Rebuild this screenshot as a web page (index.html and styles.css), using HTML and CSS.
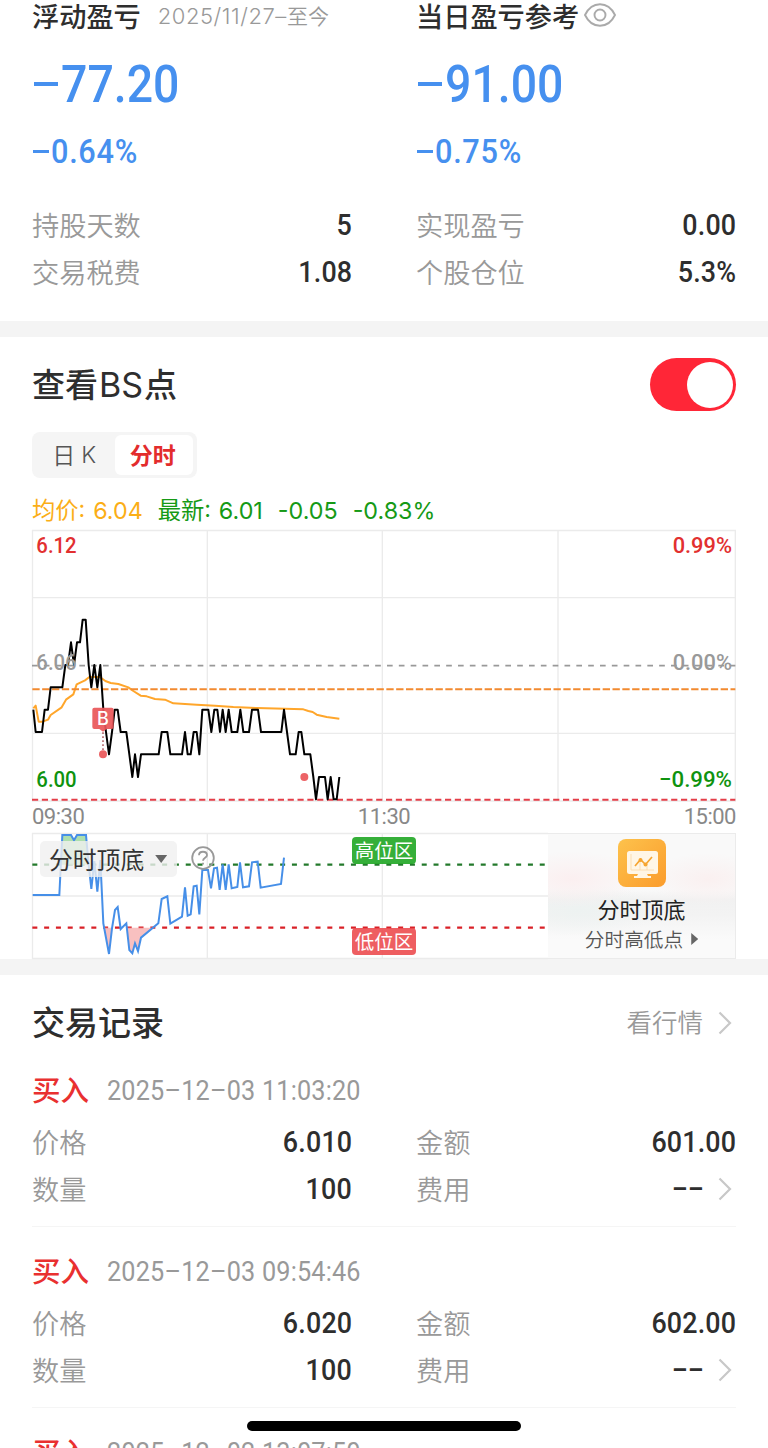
FILE: index.html
```
<!DOCTYPE html>
<html lang="zh-CN">
<head>
<meta charset="utf-8">
<title>持仓盈亏</title>
<link rel="stylesheet" href="styles.css">
</head>
<body>
<main class="page">
  <section class="summary">
    <div class="summary-col">
      <div class="summary-title"><span class="name">浮动盈亏</span><span class="range"><span class="range-num">2025/11/27–</span>至今</span></div>
      <div class="amount"><span class="dash"></span><span class="digits">77.20</span></div>
      <div class="percent"><span class="dash"></span><span class="digits">0.64%</span></div>
      <div class="kv"><span class="label">持股天数</span><span class="value">5</span></div>
      <div class="kv"><span class="label">交易税费</span><span class="value">1.08</span></div>
    </div>
    <div class="summary-col">
      <div class="summary-title"><span class="name">当日盈亏参考</span>
        <svg class="eye" viewBox="0 0 32 24"><path d="M1 12C8-2.400 24-2.400 31 12C24 26.400 8 26.400 1 12Z"/><circle cx="16" cy="12" r="5.500"/></svg>
      </div>
      <div class="amount"><span class="dash"></span><span class="digits">91.00</span></div>
      <div class="percent"><span class="dash"></span><span class="digits">0.75%</span></div>
      <div class="kv"><span class="label">实现盈亏</span><span class="value">0.00</span></div>
      <div class="kv"><span class="label">个股仓位</span><span class="value">5.3%</span></div>
    </div>
  </section>

  <section class="bs">
    <header class="bs-head"><h2 class="heading">查看<span class="latin">BS</span>点</h2><span class="switch"><span class="knob"></span></span></header>
    <div class="tabs"><span class="tab">日<span class="tab-k">K</span></span><span class="tab active">分时</span></div>
    <div class="legend"><span class="avg">均价: 6.04</span><span>最新: 6.01</span><span>-0.05</span><span>-0.83%</span></div>

    <svg class="price-chart" viewBox="36 15 2112 819">
      <g class="grid">
        <path d="M37.500 16.500H2146V828H37.500Z"/>
        <path d="M562 16V828M1087 16V828M1614 16V828M38 218H2146M38 625H2146"/>
      </g>
      <path class="avg-line" d="M40 550L47 542L56 590L68 590L84 584L92 570L125 547L138 524L160 508L170 478L195 466L208 456L240 456L256 468L272 474L295 477L325 487L340 498L362 512L380 514L405 522L435 524L460 535L530 539L585 542L640 546L710 549L850 553L865 558L878 561L890 569L920 576L958 581"/>
      <path class="ref-mid" d="M36 422H2146"/>
      <path class="ref-cost" d="M37 493H2146"/>
      <path class="ref-low" d="M36 824H2146"/>
      <path class="price-line" d="M40 554L47 621H66L74 554H84L92 487H127L136 420H144L153 352L162 420L171 352H180L188 284H197L206 420L214 487L223 420L232 487L241 420L250 554L258 621L267 688L276 621L284 554H293L302 621H319L328 688L337 756L345 688L354 756L363 688H416L425 621H442L451 688H486L495 621L503 688H512L521 621H530L538 688L547 554H565L574 621L583 554H592L600 621L608 554L617 621L626 554L635 621H652L661 554L670 621H687L696 554H714L723 621H784L792 554L801 621L810 688H827L836 621H844L853 688H871L880 756L888 823L897 756H915L923 823L932 756L941 823H950L958 756"/>
      <g class="marker">
        <rect x="217" y="548" width="64" height="64" rx="6"/>
        <path d="M238 612L249 620L260 612Z"/>
        <path class="marker-stem" d="M249 622V680"/>
        <circle cx="249" cy="688" r="12"/>
        <circle cx="853" cy="756" r="12"/>
      </g>
      <text class="marker-text" x="249" y="600">B</text>
      <text class="scale up" x="49" y="83" textLength="121" lengthAdjust="spacingAndGlyphs">6.12</text>
      <text class="scale flat" x="49" y="434" textLength="121" lengthAdjust="spacingAndGlyphs">6.06</text>
      <text class="scale down" x="49" y="785" textLength="121" lengthAdjust="spacingAndGlyphs">6.00</text>
      <text class="scale up" x="1958" y="83" textLength="178" lengthAdjust="spacingAndGlyphs">0.99%</text>
      <text class="scale flat" x="1958" y="434" textLength="178" lengthAdjust="spacingAndGlyphs">0.00%</text>
      <text class="scale down" x="1917" y="785" textLength="219" lengthAdjust="spacingAndGlyphs">−0.99%</text>
    </svg>
    <div class="axis"><span>09:30</span><span>11:30</span><span>15:00</span></div>

    <div class="sub">
      <svg class="sub-chart" viewBox="36 24 1548 378">
        <g class="grid"><path d="M1584 25.500H37.500V400.500H1584M562 25V400M1087 25V400M38 213H1584"/></g>
        <path class="ref-high" d="M37 119H1578"/>
        <path class="ref-bottom" d="M37 308H1578"/>
        <path class="zone-high" d="M122 119L127 30H153L162 46L171 30H198L206 119Z"/>
        <path class="zone-low" d="M252 308L267 385L277 308ZM321 308L328 375L337 385L345 355L354 378L363 338L398 308Z"/>
        <path class="signal" d="M38 210H118L127 30H153L162 46L171 30H198L206 120L214 192L223 108L232 200L241 105L250 295L267 387L276 310L285 255L293 246L302 312L319 295L328 375L337 385L345 355L354 378L363 338L415 295L425 222L442 214L451 296L486 275L495 187L503 272L512 268L521 184L530 182L538 268L547 135H564L573 190L582 130L591 128L599 195L608 118L617 195L626 118L635 190L652 186L660 112L669 187L687 184L696 112L713 110L722 188L783 177L792 98"/>
      </svg>
      <aside class="promo">
        <svg class="promo-icon" viewBox="0 0 48 48">
          <defs><linearGradient id="amber" x1="0" y1="0" x2="1" y2="1"><stop offset="0" stop-color="#fdc24c"/><stop offset="1" stop-color="#fb9c2c"/></linearGradient></defs>
          <rect width="48" height="48" rx="8" fill="url(#amber)"/>
          <rect x="9" y="12" width="31" height="23" rx="2.500" fill="#fff6e6"/>
          <path d="M20 35H29L30 37H33V39H16V37H19Z" fill="#fff6e6"/>
          <path d="M13 15V31H36M22 22V31M29 25V31" fill="none" stroke="#fbd9a4" stroke-width=".8"/>
          <path d="M17 27L22.500 20.500L27.500 25.500L34 18" fill="none" stroke="#f6a530" stroke-width="1.700"/>
          <circle cx="22.500" cy="21" r="2" fill="#f6a530"/><circle cx="27.500" cy="25.500" r="2" fill="#f6a530"/>
        </svg>
        <div class="promo-title">分时顶底</div>
        <div class="promo-sub">分时高低点<span class="play"></span></div>
      </aside>
      <div class="picker">分时顶底<span class="caret"></span></div>
      <svg class="help" viewBox="0 0 24 24"><circle cx="12" cy="12" r="10.800"/><path d="M8 9.200C8 4.600 16 4.600 16 9.200C16 11.800 12 11.800 12 14.800M12 16.800V18.600"/></svg>
      <div class="zone high">高位区</div>
      <div class="zone low">低位区</div>
    </div>
  </section>

  <section class="records">
    <header class="records-head"><h2 class="heading">交易记录</h2><span class="more"><span class="more-text">看行情</span><svg class="chevron" viewBox="0 0 14 24"><path d="M1.500 1.500L12 12L1.500 22.500"/></svg></span></header>

    <article class="record">
      <div class="record-head"><span class="side">买入</span><time class="time">2025–12–03 11:03:20</time></div>
      <div class="record-grid">
        <div class="kv"><span class="label">价格</span><span class="value">6.010</span></div>
        <div class="kv"><span class="label">金额</span><span class="value">601.00</span></div>
        <div class="kv"><span class="label">数量</span><span class="value">100</span></div>
        <div class="kv"><span class="label">费用</span><span class="fee"><span class="none">--</span><svg class="chevron" viewBox="0 0 14 24"><path d="M1.500 1.500L12 12L1.500 22.500"/></svg></span></div>
      </div>
    </article>

    <article class="record">
      <div class="record-head"><span class="side">买入</span><time class="time">2025–12–03 09:54:46</time></div>
      <div class="record-grid">
        <div class="kv"><span class="label">价格</span><span class="value">6.020</span></div>
        <div class="kv"><span class="label">金额</span><span class="value">602.00</span></div>
        <div class="kv"><span class="label">数量</span><span class="value">100</span></div>
        <div class="kv"><span class="label">费用</span><span class="fee"><span class="none">--</span><svg class="chevron" viewBox="0 0 14 24"><path d="M1.500 1.500L12 12L1.500 22.500"/></svg></span></div>
      </div>
    </article>

    <article class="record">
      <div class="record-head"><span class="side">买入</span><time class="time">2025–12–02 13:07:50</time></div>
    </article>
  </section>
  <div class="home-bar"></div>
</main>
</body>
</html>
```
FILE: styles.css
```
* { box-sizing: border-box; }
body { margin: 0; background: #fff; }
.page {
  position: relative;
  width: 768px;
  height: 1448px;
  overflow: hidden;
  background: #fff;
  color: #2e2e2e;
  font-family: "Noto Sans CJK SC", sans-serif;
}
.page svg { display: block; flex: none; overflow: visible; }

/* summary */
.summary {
  display: grid;
  grid-template-columns: 320px 320px;
  gap: 64px;
  height: 321px;
  padding: 0 32px;
}
.summary-title { display: flex; align-items: center; height: 30px; line-height: 30px; }
.name { font-size: 27.200px; font-weight: 500; white-space: nowrap; }
.range { margin-left: 17px; font-size: 21px; font-weight: 350; color: #999; white-space: nowrap; }
.range-num { font-family: Inter, sans-serif; font-size: 22px; font-weight: 300; letter-spacing: .550px; }
.eye { width: 32px; height: 24px; margin-left: 5px; fill: none; stroke: #aaa; stroke-width: 1.900; }
.amount, .percent {
  display: flex;
  align-items: center;
  font-family: Roboto, sans-serif;
  font-weight: 500;
  color: #4690ef;
}
.digits { transform: scaleX(.93); transform-origin: left; }
.amount { height: 78px; margin-top: 15px; font-size: 52px; letter-spacing: 0; }
.amount .digits { transform: scaleX(.893); }
.amount .dash { width: 24px; height: 4px; margin: 0 3px 0 2px; background: currentColor; }
.percent { height: 56px; font-size: 33px; letter-spacing: .750px; }
.percent .dash { width: 16px; height: 3px; margin: 0 2px 0 1px; background: currentColor; }
.percent + .kv { margin-top: 23px; }
.kv { display: flex; justify-content: space-between; align-items: center; height: 47px; }
.label { font-size: 27.200px; font-weight: 350; color: #999; line-height: 40px; margin-top: -4px; }
.value { margin: -2px 0 0; font-family: Roboto, sans-serif; font-size: 29.500px; font-weight: 500; letter-spacing: .200px; transform: scaleX(.91); transform-origin: right; }

/* chart section */
.bs { height: 638px; padding: 0 32px; border-top: 16px solid #f4f4f4; }
.bs-head { display: flex; justify-content: space-between; align-items: center; height: 95px; }
.heading { margin: -2px 0 0; font-size: 33px; font-weight: 500; line-height: 48px; }
.records .heading { margin-top: -4px; }
.latin { margin: 0 1px; font-family: Inter, sans-serif; font-size: 34px; font-weight: 400; }
.switch { display: flex; justify-content: flex-end; align-items: center; width: 86px; height: 53px; padding-right: 3px; border-radius: 27px; background: #ff2637; }
.knob { width: 46px; height: 46px; border-radius: 50%; background: #fff; }
.tabs { display: flex; align-items: center; width: 165px; height: 46px; padding: 0 4px; border-radius: 8px; background: #f5f5f5; }
.tab { flex: 1; display: flex; justify-content: center; align-items: center; gap: 6px; height: 40px; padding: 0 2px 3px 0; border-radius: 6px; font-size: 23px; font-weight: 350; line-height: 36px; color: #555; }
.tab-k { margin-top: 3px; font-family: Inter, sans-serif; font-weight: 300; }
.tab.active { background: #fff; color: #e32c2c; font-weight: 700; }
.legend { display: flex; gap: 15px; height: 52px; padding-top: 13px; font-family: Inter, "Noto Sans CJK SC", sans-serif; font-size: 23.300px; line-height: 40px; word-spacing: 1.300px; color: #169a16; white-space: nowrap; }
.legend .avg { color: #fbae17; }
.price-chart { width: 704px; height: 273px; }
.grid path { fill: none; stroke: #ebebeb; stroke-width: 4; }
.avg-line { fill: none; stroke: #ffa62b; stroke-width: 6; stroke-linejoin: round; }
.price-line { fill: none; stroke: #000; stroke-width: 6; stroke-linejoin: round; }
.ref-mid { fill: none; stroke: #999; stroke-width: 5; stroke-dasharray: 17 18.500; }
.ref-cost { fill: none; stroke: #f28a30; stroke-width: 6; stroke-dasharray: 22 7.500; }
.ref-low { fill: none; stroke: #e43e48; stroke-width: 6; stroke-dasharray: 18.500 11; }
.marker { fill: #ea5659; opacity: .92; }
.marker-stem { stroke: #b06065; stroke-width: 5; stroke-dasharray: 5 7; }
.marker-text { fill: #fff; font: 500 54px Inter, sans-serif; text-anchor: middle; }
.scale { font: 500 68px Roboto, sans-serif; }
.scale.up { fill: #e23030; }
.scale.flat { fill: #999; }
.scale.down { fill: #0f930f; }
.axis { display: flex; justify-content: space-between; height: 30px; font: 400 22px/28px Roboto, sans-serif; letter-spacing: -.500px; color: #888; }

.sub { position: relative; display: flex; height: 126px; }
.sub-chart { width: 516px; height: 126px; }
.ref-high { stroke: #23792b; stroke-width: 7; stroke-dasharray: 15 20.400; }
.ref-bottom { stroke: #d92027; stroke-width: 7; stroke-dasharray: 15 20.400; }
.zone-high { fill: #9fd99f; opacity: .85; }
.zone-low { fill: #f7b5b5; opacity: .85; }
.signal { fill: none; stroke: #468fe8; stroke-width: 6; stroke-linejoin: miter; }
.promo {
  display: flex;
  flex-direction: column;
  align-items: center;
  width: 188px;
  padding-top: 5px;
  border: 1px solid #ebebeb;
  border-left: 0;
  background: radial-gradient(ellipse 70px 28px at 24px 45px, #fbeff0, transparent), radial-gradient(ellipse 60px 26px at 160px 45px, #faf0f0, transparent), radial-gradient(ellipse 80px 26px at 32px 76px, #edf2f1, transparent), linear-gradient(#f9f9f9 45%, #f1f1f1 53%, #f3f3f3 65%, #fafafa 85%);
}
.promo-icon { width: 48px; height: 48px; }
.promo-title { margin-top: 5px; font-size: 22px; line-height: 32px; color: #222; }
.promo-sub { display: flex; align-items: center; gap: 8px; margin: 1px 0 0; font-size: 19.700px; font-weight: 350; line-height: 28px; color: #555; }
.play { width: 7px; height: 12px; background: #666; clip-path: polygon(0 0, 100% 50%, 0 100%); }
.picker { position: absolute; left: 8px; top: 8px; display: flex; align-items: center; gap: 11px; width: 137px; height: 36px; padding: 0 9px; border-radius: 5px; background: rgba(240, 240, 240, .8); font-size: 23.800px; line-height: 34px; color: #333; white-space: nowrap; }
.caret { width: 12px; height: 8px; background: #666; clip-path: polygon(0 0, 100% 0, 50% 100%); }
.help { position: absolute; left: 159px; top: 13px; width: 24px; height: 24px; fill: none; stroke: #999; stroke-width: 1.800; }
.zone { position: absolute; left: 320px; width: 64px; height: 27px; border-radius: 4px; font-size: 19.500px; line-height: 26px; text-align: center; color: #fff; }
.zone.high { top: 4px; background: rgba(31, 166, 36, .9); }
.zone.low { top: 95px; background: rgba(236, 72, 75, .88); }

/* records */
.records { padding: 0 32px; border-top: 16px solid #f4f4f4; }
.records-head { display: flex; justify-content: space-between; align-items: center; height: 95px; }
.more { display: flex; align-items: center; gap: 15px; padding-right: 4px; font-size: 25.500px; font-weight: 350; line-height: 36px; color: #999; }
.more-text { margin-top: -4px; }
.chevron { width: 14px; height: 24px; fill: none; stroke: #c8c8c8; stroke-width: 2.200; }
.record { height: 181px; }
.record + .record { border-top: 1.500px solid #f5f5f5; padding-top: 24px; }
.record:nth-of-type(1) { height: 156px; }
.record-head { display: flex; align-items: center; height: 40px; gap: 18px; }
.side { margin-top: -2px; font-size: 28.500px; font-weight: 500; color: #e93030; line-height: 40px; }
.time { font-family: Roboto, sans-serif; font-size: 27.500px; font-weight: 400; letter-spacing: .200px; color: #999; white-space: nowrap; transform: scaleX(.918); transform-origin: left; }
.record-grid { display: grid; grid-template-columns: 320px 320px; column-gap: 64px; padding-top: 9px; }
.fee { display: flex; align-items: center; gap: 14px; margin-top: -2px; padding-right: 4px; }
.none { margin-top: -2px; font-family: Roboto, sans-serif; font-size: 29.500px; font-weight: 500; transform: scaleX(1.600); transform-origin: right; }
.home-bar { position: absolute; left: 247px; top: 1421px; width: 274px; height: 10px; border-radius: 5px; background: #000; }
```
